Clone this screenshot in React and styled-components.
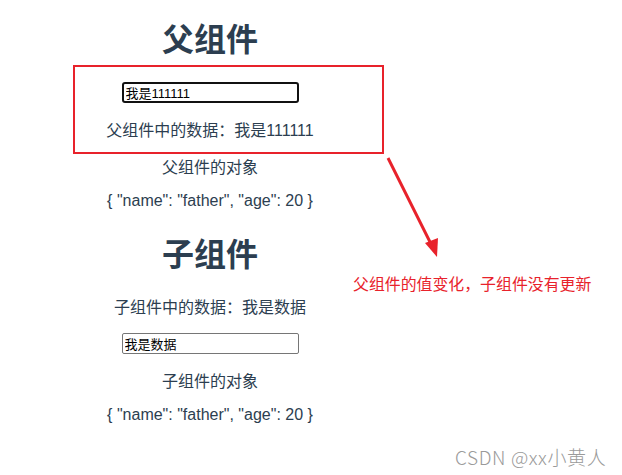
import React from "react";
import styled, { createGlobalStyle } from "styled-components";

const Global = createGlobalStyle`
  html, body { margin: 0; padding: 0; background: #ffffff; }
  body {
    width: 622px;
    height: 475px;
    overflow: hidden;
    font-family: "Liberation Sans", "Noto Sans CJK SC", sans-serif;
    color: #2c3e50;
    -webkit-font-smoothing: antialiased;
  }
`;

const Page = styled.div`
  position: relative;
  width: 622px;
  height: 475px;
`;

const Column = styled.div`
  width: 420px;
  display: flex;
  flex-direction: column;
  align-items: center;
  text-align: center;
`;

const Title = styled.h1`
  margin: ${(p) => p.$mt}px 0 0;
  font-size: 32px;
  line-height: 38px;
  font-weight: 700;
  color: #2c3e50;
`;

const Line = styled.p`
  margin: ${(p) => p.$mt}px 0 0;
  font-size: 16px;
  line-height: 20px;
  color: #2c3e50;
`;

const Field = styled.input`
  margin: ${(p) => p.$mt}px 0 0 0;
  box-sizing: border-box;
  width: 177px;
  height: 21px;
  padding: 0 2px;
  font-family: "Liberation Sans", "Noto Sans CJK SC", sans-serif;
  font-size: 13px;
  color: #000;
  background: #fff;
  border: ${(p) => (p.$focused ? "2px solid #111" : "1px solid #767676")};
  border-radius: ${(p) => (p.$focused ? "3px" : "2px")};
  outline: none;
`;

const Frame = styled.div`
  position: absolute;
  left: 73px;
  top: 65px;
  width: 311px;
  height: 89px;
  box-sizing: border-box;
  border: 2px solid #e8222b;
  pointer-events: none;
`;

const Arrow = styled.svg`
  position: absolute;
  left: 380px;
  top: 150px;
  overflow: visible;
`;

const Note = styled.div`
  position: absolute;
  left: 353px;
  top: 274px;
  font-family: "Noto Sans CJK SC", sans-serif;
  font-size: 15.9px;
  line-height: 20px;
  color: #e8222b;
  white-space: nowrap;
`;

const Watermark = styled.div`
  position: absolute;
  left: 455px;
  top: 444px;
  font-family: "Noto Sans CJK SC", sans-serif;
  font-weight: 300;
  font-size: 19px;
  letter-spacing: 0.6px;
  line-height: 26px;
  color: #9a9a9a;
  white-space: nowrap;
`;

const obj = '{ "name": "father", "age": 20 }';

export default function App() {
  return (
    <Page>
      <Global />
      <Column>
        <Title $mt={21}>父组件</Title>
        <Field $mt={23} $focused defaultValue="我是111111" />
        <Line $mt={18}>父组件中的数据：我是111111</Line>
        <Line $mt={17}>父组件的对象</Line>
        <Line $mt={13}>{obj}</Line>
        <Title $mt={25}>子组件</Title>
        <Line $mt={24}>子组件中的数据：我是数据</Line>
        <Field $mt={15} defaultValue="我是数据" />
        <Line $mt={18}>子组件的对象</Line>
        <Line $mt={13}>{obj}</Line>
      </Column>
      <Frame />
      <Arrow width="70" height="120" viewBox="0 0 70 120">
        <line x1="8" y1="8" x2="52" y2="96" stroke="#e8222b" strokeWidth="3" />
        <polygon points="57,107 45,93 58,88" fill="#e8222b" />
      </Arrow>
      <Note>父组件的值变化，子组件没有更新</Note>
      <Watermark>CSDN @xx小黄人</Watermark>
    </Page>
  );
}
